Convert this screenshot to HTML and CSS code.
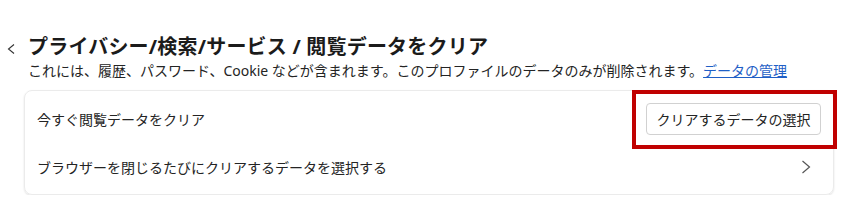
FILE: index.html
```html
<!DOCTYPE html>
<html lang="ja">
<head>
    <meta charset="UTF-8">
    <meta name="viewport" content="width=device-width, initial-scale=1.0">
    <title>閲覧データをクリア</title>
    <link rel="stylesheet" href="styles.css">
</head>
<body>
    <div class="page">
        <div class="header">
            <button class="back-btn" aria-label="戻る">
                <svg width="24" height="28" viewBox="0 0 24 28">
                    <polyline points="10,11.5 4.5,16 10,20.5" fill="none" stroke="#333" stroke-width="1.1"/>
                </svg>
            </button>
            <div class="header-text">
                <h1>プライバシー/検索/サービス / 閲覧データをクリア</h1>
                <p class="subtitle">これには、履歴、パスワード、Cookie などが含まれます。このプロファイルのデータのみが削除されます。<a href="#">データの管理</a></p>
            </div>
        </div>

        <div class="card">
            <div class="row">
                <span class="row-label">今すぐ閲覧データをクリア</span>
                <span class="highlight">
                    <button class="select-btn">クリアするデータの選択</button>
                </span>
            </div>
            <div class="row row-link">
                <span class="row-label">ブラウザーを閉じるたびにクリアするデータを選択する</span>
                <svg class="chevron" width="14" height="16" viewBox="0 0 14 16">
                    <polyline points="3.5,2 10.5,8 3.5,14" fill="none" stroke="#555" stroke-width="1.2"/>
                </svg>
            </div>
        </div>
    </div>
</body>
</html>
```

FILE: styles.css
```css
body {
    margin: 0;
    background: #fff;
    font-family: "Noto Sans", "Noto Sans CJK JP", sans-serif;
    color: #242424;
}

.page {
    padding-top: 33px;
}

.header {
    display: flex;
    align-items: flex-start;
    padding-left: 4px;
}

.back-btn {
    background: none;
    border: none;
    padding: 0;
    margin: 0;
    width: 24px;
    height: 28px;
    cursor: pointer;
}

.back-btn svg {
    display: block;
}

h1 {
    margin: 0;
    font-size: 20px;
    line-height: 28px;
    font-weight: 700;
    color: #1b1b1b;
    letter-spacing: 0.2px;
}

.subtitle {
    margin: 0;
    font-size: 14px;
    line-height: 20px;
    color: #242424;
}

.subtitle a {
    color: #1f5fc6;
    text-decoration: underline;
}

.card {
    margin: 9px 21px 0 24px;
    padding: 4px 0 3px;
    border: 1px solid #ebebeb;
    border-radius: 8px;
    box-shadow: 0 1px 2px rgba(0,0,0,0.12);
}

.row {
    display: flex;
    align-items: center;
    justify-content: space-between;
    height: 48px;
    padding: 0 12px;
    font-size: 14px;
}

.row-link {
    padding-right: 20px;
    cursor: pointer;
}

.chevron {
    display: block;
}

.highlight {
    position: relative;
    display: inline-block;
}

/* red annotation frame around the button */
.highlight::after {
    content: "";
    position: absolute;
    left: -14px;
    right: -16px;
    top: -13px;
    bottom: -14px;
    border: 4px solid #c00000;
    pointer-events: none;
}

.select-btn {
    display: block;
    width: 175px;
    height: 32px;
    padding: 0;
    white-space: nowrap;
    background: #fff;
    border: 1px solid #d1d1d1;
    border-radius: 4px;
    font-family: inherit;
    font-size: 14px;
    color: #242424;
    cursor: pointer;
}
```
